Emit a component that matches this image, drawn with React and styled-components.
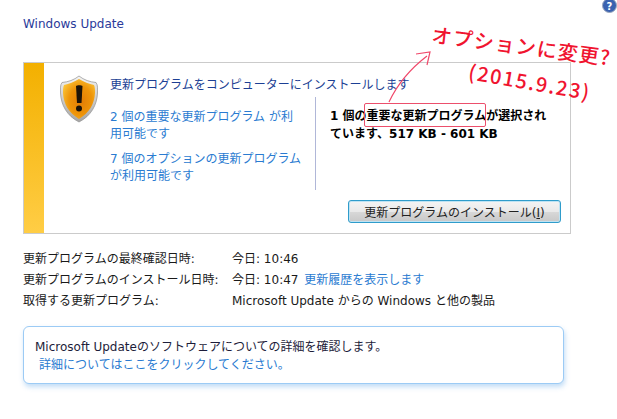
import React from 'react'
import styled, { createGlobalStyle } from 'styled-components'

const GlobalStyle = createGlobalStyle`
    html, body {
        margin: 0;
        background: #fff;
        overflow: hidden;
    }
    body {
        font-family: 'DejaVu Sans', 'Noto Sans CJK JP', sans-serif;
        font-size: 12px;
        color: #1a1a1a;
    }
`

const Page = styled.main`
    position: relative;
    width: 617px;
    height: 419px;
    overflow: hidden;
    padding-left: 23px;
    box-sizing: border-box;
`
const Header = styled.header`
    display: flex;
    justify-content: space-between;
    height: 62px;
`
const Title = styled.h1`
    margin: 16px 0 0;
    font-size: 12px;
    font-weight: 400;
    line-height: 17px;
    color: #2a3a9a;
`
const HelpIcon = styled.svg`
    width: 15px;
    height: 15px;
    margin-top: -2px;
`
const Card = styled.section`
    display: flex;
    width: 548px;
    height: 172px;
    box-sizing: border-box;
    border: 1px solid #cbcbcb;
`
const Stripe = styled.div`
    width: 20px;
    background: linear-gradient(#f3b000, #ffcd45);
`
const CardBody = styled.div`
    flex: 1;
    display: flex;
    flex-direction: column;
`
const CardMain = styled.div`
    display: flex;
    box-sizing: border-box;
    padding: 12px 0 0 16px;
    height: 137px;
`
const ShieldIcon = styled.svg`
    width: 38px;
    height: 48px;
    margin-right: 12px;
    flex-shrink: 0;
`
const Content = styled.div`
    flex: 1;
`
const Heading = styled.div`
    color: #1c3f94;
    line-height: 18px;
    padding-top: 1px;
`
const Split = styled.div`
    display: flex;
    margin-top: 3px;
`
const LinkList = styled.div`
    width: 192px;
    margin-right: 13px;
    padding-top: 12px;
    display: flex;
    flex-direction: column;
    gap: 8px;
`
const TextLink = styled.a`
    display: ${(p) => (p.$inline ? 'inline' : 'block')};
    color: #2a7bd1;
    line-height: 17px;
    margin-left: ${(p) => p.$indent || 0}px;
`
const NoticeLink = styled(TextLink)`
    margin-top: 1px;
`
const Summary = styled.div`
    width: 235px;
    height: 93px;
    box-sizing: border-box;
    border-left: 1px solid #b0b7d8;
    padding: 10px 0 0 14px;
    font-weight: 700;
    line-height: 18px;
    color: #000;
`
const ButtonRow = styled.div`
    display: flex;
    justify-content: flex-end;
    padding-right: 9px;
`
const InstallButton = styled.button`
    width: 213px;
    height: 23px;
    padding: 0;
    font: inherit;
    color: #222;
    border: 1px solid #2f9ccb;
    border-radius: 3px;
    box-shadow: inset 0 0 0 1px #bfe3f3;
    background: linear-gradient(#f4f4f4 0%, #e9e9e9 50%, #d8d8d8 52%, #c8c8c8 100%);
    u {
        text-underline-offset: 1px;
    }
`
const InfoTable = styled.dl`
    display: grid;
    grid-template-columns: 209px 1fr;
    grid-auto-rows: 21px;
    margin: 15px 0 0;
    line-height: 21px;
`
const InfoLabel = styled.dt`
    margin: 0;
`
const InfoValue = styled.dd`
    margin: 0;
`
const NoticeBox = styled.div`
    width: 541px;
    height: 58px;
    margin-top: 14px;
    padding: 11px 11px 0;
    box-sizing: border-box;
    background: #fff;
    border: 1px solid #9ccbf5;
    border-radius: 6px;
    box-shadow: 1px 3px 5px rgba(120, 180, 235, 0.45);
    line-height: 18px;
    color: #1d1d3a;
`
const Annotation = styled.svg`
    position: absolute;
    left: 380px;
    top: 45px;
    width: 60px;
    height: 62px;
    pointer-events: none;
`
const Highlight = styled.div`
    position: absolute;
    left: 364px;
    top: 103px;
    width: 122px;
    height: 24px;
    box-sizing: border-box;
    border: 1px solid #ec4f6c;
    border-radius: 2px;
    pointer-events: none;
`
const Scribble = styled.div`
    position: absolute;
    left: ${(p) => p.$x}px;
    top: ${(p) => p.$y}px;
    font-family: 'Noto Sans CJK JP', sans-serif;
    font-size: ${(p) => p.$size}px;
    font-weight: 500;
    letter-spacing: ${(p) => p.$spacing}px;
    line-height: 1;
    white-space: nowrap;
    color: #f0142f;
    transform: rotate(${(p) => p.$tilt}deg);
    transform-origin: left center;
`

function Shield() {
    return (
        <ShieldIcon viewBox="0 0 38 48">
            <defs>
                <linearGradient id="shieldEdge" x1="0" y1="0" x2="0" y2="1">
                    <stop offset="0" stopColor="#f4f4f4" />
                    <stop offset="1" stopColor="#a5a5a5" />
                </linearGradient>
                <radialGradient id="shieldFill" cx="0.55" cy="0.55" r="0.65">
                    <stop offset="0" stopColor="#e27c06" />
                    <stop offset="0.55" stopColor="#ee9408" />
                    <stop offset="1" stopColor="#fbc63a" />
                </radialGradient>
            </defs>
            <path
                d="M19 1 C24 5 30 7 36 7.500 C38 10 37.500 14 37.500 18 C37 30 31 41 19 47 C7 41 1 30 0.500 18 C0.500 14 0 10 2 7.500 C8 7 14 5 19 1 Z"
                fill="url(#shieldEdge)"
                stroke="#8f8f8f"
                strokeWidth="0.7"
            />
            <path
                d="M19 4 C24 7 29 9 34 10 C35 12 35 15 35 18 C34.500 29 29 38 19 44 C9 38 3.500 29 3 18 C3 15 3 12 4 10 C9 9 14 7 19 4 Z"
                fill="url(#shieldFill)"
            />
            <path d="M16 11 C17 10 21.500 10 22.500 11 L21.500 28 L17 28 Z" fill="#1c1308" />
            <circle cx="19" cy="33.500" r="3" fill="#1c1308" />
        </ShieldIcon>
    )
}

function App() {
    return (
        <Page>
            <GlobalStyle />
            <Header>
                <Title>Windows Update</Title>
                <HelpIcon viewBox="0 0 15 15">
                    <circle cx="7.500" cy="7.500" r="7" fill="#3a62b0" stroke="#9aa6bd" />
                    <text x="7.500" y="11.500" fontSize="10" fontWeight="700" fill="#fff" textAnchor="middle">
                        ?
                    </text>
                </HelpIcon>
            </Header>
            <Card>
                <Stripe />
                <CardBody>
                    <CardMain>
                        <Shield />
                        <Content>
                            <Heading>更新プログラムをコンピューターにインストールします</Heading>
                            <Split>
                                <LinkList>
                                    <TextLink>2 個の重要な更新プログラム が利用可能です</TextLink>
                                    <TextLink>7 個のオプションの更新プログラムが利用可能です</TextLink>
                                </LinkList>
                                <Summary>1 個の重要な更新プログラムが選択されています、517 KB - 601 KB</Summary>
                            </Split>
                        </Content>
                    </CardMain>
                    <ButtonRow>
                        <InstallButton>
                            更新プログラムのインストール(<u>I</u>)
                        </InstallButton>
                    </ButtonRow>
                </CardBody>
            </Card>
            <InfoTable>
                <InfoLabel>更新プログラムの最終確認日時:</InfoLabel>
                <InfoValue>今日: 10:46</InfoValue>
                <InfoLabel>更新プログラムのインストール日時:</InfoLabel>
                <InfoValue>
                    今日: 10:47 <TextLink $inline $indent={2}>更新履歴を表示します</TextLink>
                </InfoValue>
                <InfoLabel>取得する更新プログラム:</InfoLabel>
                <InfoValue>Microsoft Update からの Windows と他の製品</InfoValue>
            </InfoTable>
            <NoticeBox>
                Microsoft Updateのソフトウェアについての詳細を確認します。
                <NoticeLink $indent={4}>詳細についてはここをクリックしてください。</NoticeLink>
            </NoticeBox>
            <Highlight />
            <Annotation viewBox="0 0 60 62">
                <path
                    d="M9 57 C18 38 30 24 47 11 M36 9 L50 7 L47 20"
                    fill="none"
                    stroke="#f0486a"
                    strokeWidth="1.200"
                />
            </Annotation>
            <Scribble $x={432} $y={24} $size={20} $spacing={1.2} $tilt={7.5}>
                オプションに変更?
            </Scribble>
            <Scribble $x={469} $y={61} $size={20} $spacing={1.6} $tilt={10}>
                (2015.9.23)
            </Scribble>
        </Page>
    )
}

export default App
